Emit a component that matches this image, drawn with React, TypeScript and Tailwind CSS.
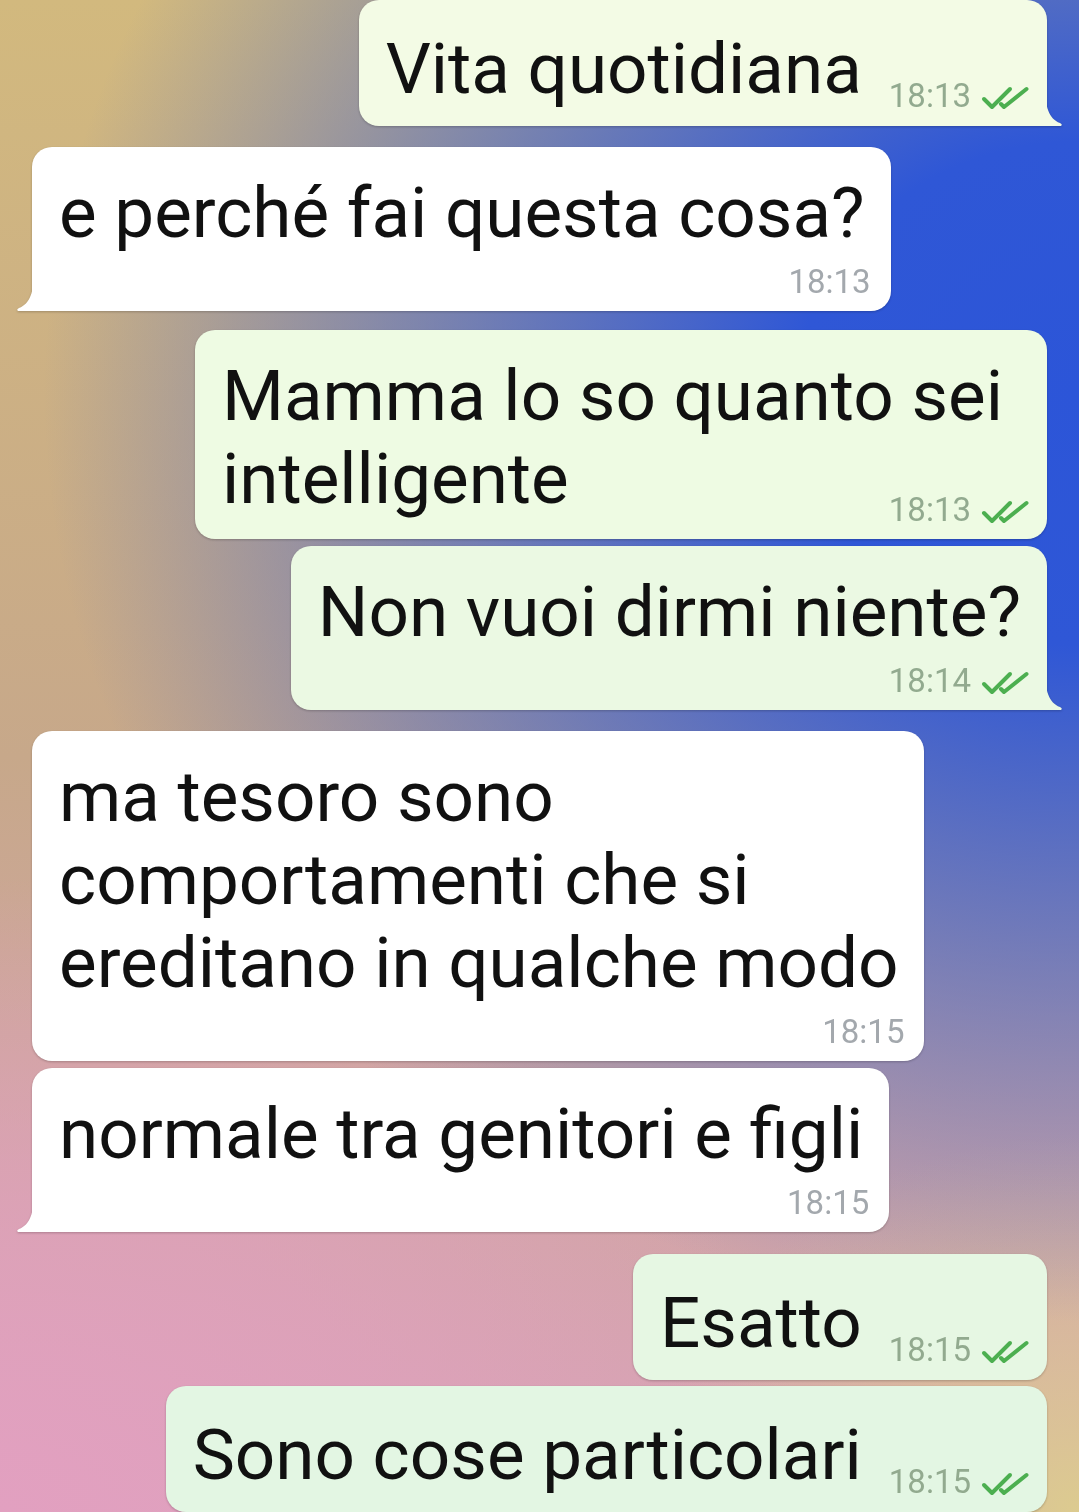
import type { ReactNode } from 'react';

type Mode = 'inline' | 'below' | 'overlay';

interface Msg {
  out: boolean;
  tail: boolean;
  mode: Mode;
  text: ReactNode;
  time: string;
  bg: string;
  fill: string;
  gap: string;
}

const messages: Msg[] = [
  { out: true, tail: true, mode: 'inline', text: 'Vita quotidiana', time: '18:13', bg: 'bg-[#f3fbe5]', fill: '#f3fbe5', gap: 'mt-0' },
  { out: false, tail: true, mode: 'below', text: 'e perché fai questa cosa?', time: '18:13', bg: 'bg-white', fill: '#ffffff', gap: 'mt-[21px]' },
  {
    out: true,
    tail: false,
    mode: 'overlay',
    text: (
      <>
        Mamma lo so quanto sei
        <br />
        intelligente
      </>
    ),
    time: '18:13',
    bg: 'bg-[#eefbe3]',
    fill: '#eefbe3',
    gap: 'mt-[19px]',
  },
  { out: true, tail: true, mode: 'below', text: 'Non vuoi dirmi niente?', time: '18:14', bg: 'bg-[#ebf9e3]', fill: '#ebf9e3', gap: 'mt-[7px]' },
  {
    out: false,
    tail: false,
    mode: 'below',
    text: (
      <>
        ma tesoro sono
        <br />
        comportamenti che si
        <br />
        ereditano in qualche modo
      </>
    ),
    time: '18:15',
    bg: 'bg-white',
    fill: '#ffffff',
    gap: 'mt-[21px]',
  },
  { out: false, tail: true, mode: 'below', text: 'normale tra genitori e figli', time: '18:15', bg: 'bg-white', fill: '#ffffff', gap: 'mt-[7px]' },
  { out: true, tail: false, mode: 'inline', text: 'Esatto', time: '18:15', bg: 'bg-[#e6f7e3]', fill: '#e6f7e3', gap: 'mt-[22px]' },
  { out: true, tail: false, mode: 'inline', text: 'Sono cose particolari', time: '18:15', bg: 'bg-[#e3f6e3]', fill: '#e3f6e3', gap: 'mt-[6px]' },
];

function DoubleCheck() {
  return (
    <svg width="48" height="26" viewBox="0 0 48 26" fill="none" className="ml-[10px] mb-[5px]">
      <path d="M3 14 L11 22 L29 4" stroke="#4caf50" strokeWidth="4" strokeLinecap="round" strokeLinejoin="round" />
      <path d="M20 19 L23 22 L45.5 4" stroke="#4caf50" strokeWidth="4" strokeLinecap="round" strokeLinejoin="round" />
    </svg>
  );
}

function Time({ out, time }: { out: boolean; time: string }) {
  return (
    <div className={`flex items-end text-[33px] leading-[40px] ${out ? 'text-[#92aa8f]' : 'text-[#a3a8ad]'}`}>
      <span>{time}</span>
      {out && <DoubleCheck />}
    </div>
  );
}

function Tail({ out, fill }: { out: boolean; fill: string }) {
  // curved tail at the bottom corner of the last bubble in a group
  return (
    <svg
      width="18"
      height="38"
      viewBox="0 0 18 38"
      className={`absolute bottom-0 ${out ? 'right-[-16px]' : 'left-[-16px] -scale-x-100'}`}
    >
      <path d="M0 0 C0 18 4 31 15 35 Q18 36.5 16 38 L0 38 Z" fill={fill} />
    </svg>
  );
}

function Bubble({ msg }: { msg: Msg }) {
  const { out, tail, mode, text, time, bg, fill } = msg;
  const radius = tail ? (out ? 'rounded-[20px] rounded-br-none' : 'rounded-[20px] rounded-bl-none') : 'rounded-[20px]';

  return (
    <div
      className={`relative ${bg} ${radius} pl-[27px] ${out ? 'pr-[18px]' : 'pr-[20px]'} drop-shadow-[0_1.5px_1px_rgba(0,0,0,0.22)]`}
    >
      {tail && <Tail out={out} fill={fill} />}
      {mode === 'inline' && (
        <div className="flex items-end pt-[27px] pb-[16px]">
          <div className="text-[71px] leading-[83px] text-[#111111] mr-[27px]">{text}</div>
          <div className="-mb-[6px]">
            <Time out={out} time={time} />
          </div>
        </div>
      )}
      {mode === 'below' && (
        <div className="pt-[24px] pb-[9px]">
          <div className={`text-[71px] leading-[83px] text-[#111111] ${out ? 'pr-[8px]' : 'pr-[6px]'}`}>{text}</div>
          <div className="flex justify-end mt-[8px]">
            <Time out={out} time={time} />
          </div>
        </div>
      )}
      {mode === 'overlay' && (
        <div className="pt-[24px] pb-[9px]">
          <div className="text-[71px] leading-[83px] text-[#111111] pr-[26px]">{text}</div>
          <div className="flex justify-end -mt-[30px]">
            <Time out={out} time={time} />
          </div>
        </div>
      )}
    </div>
  );
}

export default function App() {
  return (
    <div className="w-full h-[1512px] overflow-hidden font-['Roboto',sans-serif] bg-[radial-gradient(ellipse_100%_64%_at_100%_26%,#2c55d8_0%,#2f57d6_26%,rgba(64,98,205,0.62)_58%,rgba(64,98,205,0)_96%),radial-gradient(ellipse_75%_42%_at_0%_100%,#e2a0c0_0%,rgba(226,160,192,0.6)_50%,rgba(226,160,192,0)_100%),radial-gradient(ellipse_40%_25%_at_100%_100%,#dccb8f_0%,rgba(220,203,143,0)_100%),linear-gradient(to_bottom,#d2b97e_0%,#c7a88a_50%,#d8a3b8_100%)]">
      <div className="flex flex-col">
        {messages.map((m, i) => (
          <div key={i} className={`flex ${m.out ? 'justify-end pr-[32px]' : 'justify-start pl-[32px]'} ${m.gap}`}>
            <Bubble msg={m} />
          </div>
        ))}
      </div>
    </div>
  );
}
